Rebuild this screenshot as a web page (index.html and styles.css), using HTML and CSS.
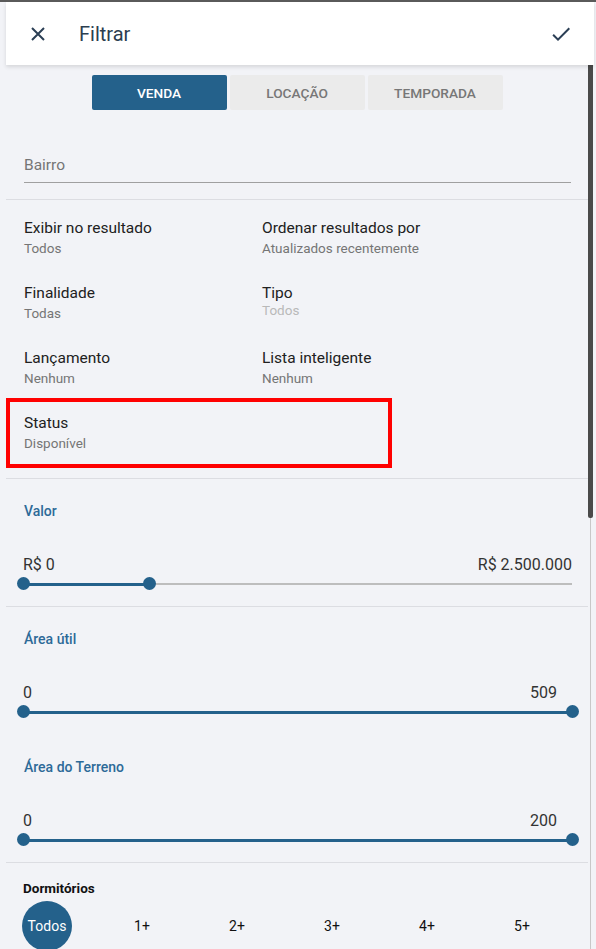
FILE: index.html
```html
<!DOCTYPE html>
<html lang="pt-BR">
<head>
    <meta charset="UTF-8">
    <meta name="viewport" content="width=device-width, initial-scale=1.0">
    <title>Filtrar</title>
    <link rel="stylesheet" href="styles.css">
</head>
<body>
    <header class="appbar">
        <button class="icon-btn close-btn" type="button" aria-label="Fechar">
            <svg viewBox="0 0 24 24" width="24" height="24"><path d="M6 6L18 18M18 6L6 18" stroke="currentColor" stroke-width="2" fill="none"/></svg>
        </button>
        <span class="appbar-title">Filtrar</span>
        <button class="icon-btn confirm-btn" type="button" aria-label="Aplicar">
            <svg viewBox="0 0 24 24" width="24" height="24"><path d="M9 16.17L4.83 12l-1.42 1.41L9 19 21 7l-1.41-1.41z" fill="currentColor"/></svg>
        </button>
    </header>

    <div class="main">
        <div class="content">
            <div class="tabs">
                <button class="tab active" type="button">Venda</button>
                <button class="tab" type="button">Locação</button>
                <button class="tab" type="button">Temporada</button>
            </div>

            <div class="field">Bairro</div>

            <hr class="divider">

            <!-- preferences -->
            <div class="prefs">
                <div class="pref">
                    <div class="pref-label">Exibir no resultado</div>
                    <div class="pref-value">Todos</div>
                </div>
                <div class="pref">
                    <div class="pref-label">Ordenar resultados por</div>
                    <div class="pref-value">Atualizados recentemente</div>
                </div>
                <div class="pref">
                    <div class="pref-label">Finalidade</div>
                    <div class="pref-value">Todas</div>
                </div>
                <div class="pref">
                    <div class="pref-label">Tipo</div>
                    <div class="pref-value disabled">Todos</div>
                </div>
                <div class="pref">
                    <div class="pref-label">Lançamento</div>
                    <div class="pref-value">Nenhum</div>
                </div>
                <div class="pref">
                    <div class="pref-label">Lista inteligente</div>
                    <div class="pref-value">Nenhum</div>
                </div>
            </div>

            <div class="pref highlight">
                <div class="pref-label">Status</div>
                <div class="pref-value">Disponível</div>
            </div>

            <hr class="divider">

            <!-- ranges -->
            <div class="range-section">
                <div class="range-title">Valor</div>
                <div class="range-labels">
                    <span>R$ 0</span>
                    <span>R$ 2.500.000</span>
                </div>
                <div class="slider">
                    <div class="slider-fill" style="width: 22.95%"></div>
                    <span class="thumb" style="left: 0%"></span>
                    <span class="thumb" style="left: 22.95%"></span>
                </div>
            </div>

            <hr class="divider">

            <div class="range-section">
                <div class="range-title">Área útil</div>
                <div class="range-labels inset">
                    <span>0</span>
                    <span>509</span>
                </div>
                <div class="slider">
                    <div class="slider-fill" style="width: 100%"></div>
                    <span class="thumb" style="left: 0%"></span>
                    <span class="thumb" style="left: 100%"></span>
                </div>

                <div class="range-title spaced">Área do Terreno</div>
                <div class="range-labels inset">
                    <span>0</span>
                    <span>200</span>
                </div>
                <div class="slider">
                    <div class="slider-fill" style="width: 100%"></div>
                    <span class="thumb" style="left: 0%"></span>
                    <span class="thumb" style="left: 100%"></span>
                </div>
            </div>

            <hr class="divider">

            <div class="rooms">
                <div class="rooms-title">Dormitórios</div>
                <div class="rooms-options">
                    <button class="room active" type="button">Todos</button>
                    <button class="room" type="button">1+</button>
                    <button class="room" type="button">2+</button>
                    <button class="room" type="button">3+</button>
                    <button class="room" type="button">4+</button>
                    <button class="room" type="button">5+</button>
                </div>
            </div>
        </div>

        <div class="scrollbar">
            <div class="scroll-thumb"></div>
            <div class="scroll-track"></div>
        </div>
    </div>
</body>
</html>
```

FILE: styles.css
```css
body {
    font-family: Roboto, "Liberation Sans", Arial, sans-serif;
    background-color: #f2f3f7;
    border-top: 2px solid #5a5a5a;
    margin: 0;
    height: 947px;
    overflow: hidden;
    color: #212121;
}

button {
    font-family: inherit;
    border: none;
    background: none;
    padding: 0;
    cursor: pointer;
}

/* top bar */
.appbar {
    position: relative;
    z-index: 2;
    display: flex;
    align-items: center;
    margin-left: 6px;
    width: 588px;
    height: 63px;
    background-color: #fff;
    box-shadow: 0 2px 4px rgba(0,0,0,0.12);
}
.icon-btn {
    width: 24px;
    height: 24px;
    color: #2b3f55;
}
.icon-btn svg {
    display: block;
}
.close-btn {
    margin-left: 20px;
}
.appbar-title {
    margin-left: 29px;
    font-size: 20px;
    color: #2c3e50;
    flex: 1;
}
.confirm-btn {
    margin-right: 21px;
}

.main {
    display: flex;
    margin-left: 6px;
}
.content {
    width: 582px;
}

/* scrollbar */
.scrollbar {
    width: 6px;
    display: flex;
    flex-direction: column;
}
.scroll-thumb {
    width: 5px;
    height: 453px;
    background-color: #4a4a4a;
    border-radius: 0 0 2px 2px;
}
.scroll-track {
    width: 1px;
    height: 440px;
    margin-left: 2px;
    background-color: #c8c8c8;
}

/* tabs */
.tabs {
    display: flex;
    justify-content: center;
    gap: 3px;
    margin-top: 10px;
}
.tab {
    width: 135px;
    height: 35px;
    border-radius: 2px;
    background-color: #ebebeb;
    color: #777;
    font-size: 13.7px;
    font-weight: 500;
    text-transform: uppercase;
}
.tab.active {
    background-color: #24618b;
    color: #fff;
}

.field {
    margin: 45px 17px 0 18px;
    height: 20px;
    line-height: 20px;
    padding-bottom: 7px;
    border-bottom: 1px solid #a0a0a0;
    font-size: 15.5px;
    color: #757575;
}

.divider {
    border: none;
    border-top: 1px solid #dcdde2;
    margin: 16px 0 0;
}

/* preferences */
.prefs {
    display: grid;
    grid-template-columns: 238px 1fr;
    row-gap: 25px;
    padding: 18px 0 0 18px;
}
.pref-label {
    font-size: 15.5px;
    line-height: 20px;
    color: #212121;
}
.pref-value {
    font-size: 13.5px;
    line-height: 20px;
    color: #757575;
}
.pref-value.disabled {
    color: #b9b9b9;
    margin-top: -3px;
    margin-bottom: 3px;
}
.pref.highlight {
    width: 350px;
    margin-top: 10px;
    padding: 11px 14px;
    border: 4px solid #ff0000;
}
.pref.highlight + .divider {
    margin-top: 10px;
}

/* range sliders */
.range-section {
    padding: 22px 16px 15px 17px;
}
.range-title {
    font-size: 14px;
    font-weight: 500;
    line-height: 20px;
    color: #2d6a98;
    padding-left: 1px;
}
.range-title.spaced {
    margin-top: 38px;
}
.range-labels {
    display: flex;
    justify-content: space-between;
    margin-top: 34px;
    font-size: 16px;
    line-height: 20px;
    color: #333;
    padding-left: 0;
}
.range-labels.inset {
    padding-right: 15px;
}
.slider {
    position: relative;
    margin: 2px 0 0;
    height: 14px;
    display: flex;
    align-items: center;
    background: linear-gradient(#bdbdbd, #bdbdbd) left center / 100% 2px no-repeat;
}
.slider-fill {
    height: 3px;
    background-color: #24618b;
}
.thumb {
    position: absolute;
    top: 0;
    width: 13px;
    height: 13px;
    margin-left: -6px;
    border-radius: 50%;
    background-color: #24618b;
}
.range-section + .divider {
    margin-top: 0;
}

/* bedrooms */
.rooms {
    padding: 15px 0 0 17px;
}
.rooms-title {
    font-size: 13.5px;
    font-weight: 700;
    line-height: 20px;
    color: #111;
}
.rooms-options {
    display: flex;
    gap: 45px;
    margin-top: 3px;
    margin-left: -1px;
}
.room {
    width: 50px;
    height: 50px;
    border-radius: 50%;
    font-size: 14px;
    color: #111;
}
.room.active {
    background-color: #24618b;
    color: #fff;
}
```
